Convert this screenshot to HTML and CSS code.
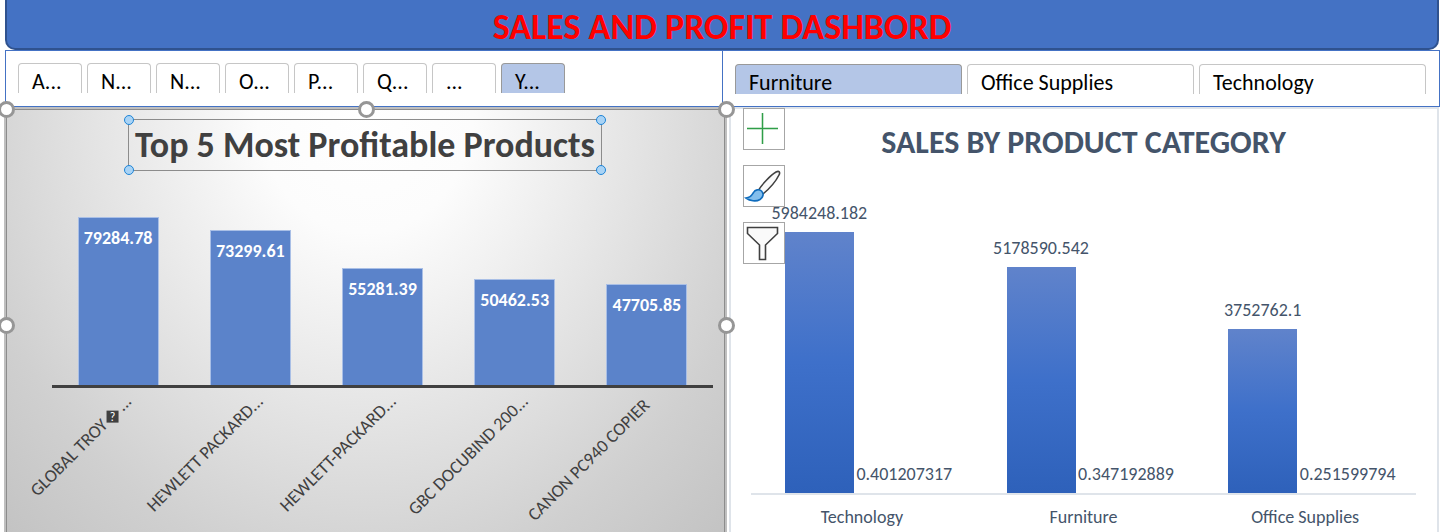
FILE: index.html
```html
<!DOCTYPE html>
<html lang="en">
<head>
<meta charset="utf-8">
<title>Sales and Profit Dashbord</title>
<link rel="stylesheet" href="styles.css">
</head>
<body>
<main class="dashboard">
  <header class="banner"><h1>SALES AND PROFIT DASHBORD</h1></header>

  <div class="slicers">
    <div class="slicer slicer-short">
      <button type="button">A...</button>
      <button type="button">N...</button>
      <button type="button">N...</button>
      <button type="button">O...</button>
      <button type="button">P...</button>
      <button type="button">Q...</button>
      <button type="button">...</button>
      <button type="button" class="selected">Y...</button>
    </div>
    <div class="slicer slicer-wide">
      <button type="button" class="selected">Furniture</button>
      <button type="button">Office Supplies</button>
      <button type="button">Technology</button>
    </div>
  </div>

  <div class="charts">
    <section class="chart products">
      <div class="title-box">
        <h2>Top 5 Most Profitable Products</h2>
        <i class="dot nw"></i><i class="dot ne"></i><i class="dot sw"></i><i class="dot se"></i>
      </div>
      <div class="plot">
        <div class="column"><div class="bar" style="height:78.5%">79284.78</div></div>
        <div class="column"><div class="bar" style="height:72.4%">73299.61</div></div>
        <div class="column"><div class="bar" style="height:54.7%">55281.39</div></div>
        <div class="column"><div class="bar" style="height:49.5%">50462.53</div></div>
        <div class="column"><div class="bar" style="height:47.2%">47705.85</div></div>
      </div>
      <div class="names">
        <div class="name"><span>GLOBAL TROY<b class="unknown">?</b>...</span></div>
        <div class="name"><span>HEWLETT PACKARD...</span></div>
        <div class="name"><span>HEWLETT-PACKARD...</span></div>
        <div class="name"><span>GBC DOCUBIND 200...</span></div>
        <div class="name whole"><span>CANON PC940 COPIER</span></div>
      </div>
      <i class="handle top left"></i><i class="handle top center"></i><i class="handle top right"></i>
      <i class="handle middle left"></i><i class="handle middle right"></i>
    </section>

    <section class="chart categories">
      <h2>SALES BY PRODUCT CATEGORY</h2>
      <div class="plot">
        <div class="group">
          <div class="series"><span>5984248.182</span><div class="bar" style="height:78.6%"></div></div>
          <div class="series"><span>0.401207317</span></div>
        </div>
        <div class="group">
          <div class="series"><span>5178590.542</span><div class="bar" style="height:68.1%"></div></div>
          <div class="series"><span>0.347192889</span></div>
        </div>
        <div class="group">
          <div class="series"><span>3752762.1</span><div class="bar" style="height:49.4%"></div></div>
          <div class="series"><span>0.251599794</span></div>
        </div>
      </div>
      <div class="axis-labels"><span>Technology</span><span>Furniture</span><span>Office Supplies</span></div>
      <div class="tools">
        <button type="button" aria-label="Chart elements">
          <svg viewBox="0 0 40 40"><path d="M3 19.500H34M18.500 4V35" stroke="#8fcb9b" stroke-width="2"/><path d="M3 19.500H34M18.500 4V35" stroke="#2f9e48"/></svg>
        </button>
        <button type="button" aria-label="Chart styles">
          <svg viewBox="0 0 40 40">
            <path d="M14 25C18 18 27 9 32 6C35 4.500 36.500 6 35 9C31.500 16 25 23 19 28Z" fill="#fafafa" stroke="#404040" stroke-width="1.600"/>
            <path d="M2 32C7 31.500 8 29 9.500 26.500C11 23.500 15 23 17.500 25C20 27.500 19.500 31 16 33.500C12 36 6 35 2 32Z" fill="#83beec" stroke="#0f6cbd" stroke-width="1.600"/>
          </svg>
        </button>
        <button type="button" aria-label="Chart filters">
          <svg viewBox="0 0 40 40"><path d="M3.500 4.500H33.500V10.500L21.500 22V36.500H15.500V22L3.500 10.500Z" fill="#fafafa" stroke="#404040" stroke-width="1.600"/></svg>
        </button>
      </div>
    </section>
  </div>
</main>
</body>
</html>
```

FILE: styles.css
```css
* { box-sizing: border-box; }

body {
  margin: 0;
  background: #fff;
  font-family: Carlito, Lato, sans-serif;
}

h1, h2 { margin: 0; font-weight: 700; white-space: nowrap; }

.dashboard {
  display: flex;
  flex-direction: column;
  height: 100vh;
  min-height: 440px;
  padding: 0 3px 0 5px;
  overflow: hidden;
}

.banner {
  margin-right: 1px;
  background: #4472c4;
  border: 2px solid #2f528f;
  border-top: 0;
  border-radius: 0 0 10px 10px;
  padding: 8px 0 2px;
  text-align: center;
}
.banner h1 { font-size: 36px; line-height: 38px; color: #f00; }

/* Slicers */
.slicers {
  display: grid;
  grid-template-columns: 716fr 717fr;
  border: 1px solid #4472c4;
}
.slicer { display: flex; gap: 5px; height: 55px; padding: 12px; }
.slicer-wide { border-left: 1px solid #4472c4; padding: 13px 13px 12px 12px; }
.slicer button {
  height: 30px;
  padding: 6px 13px 0;
  border: 1px solid #c6c6c6;
  border-bottom: 0;
  border-radius: 4px 4px 0 0;
  background: #fff;
  color: #000;
  font-family: inherit;
  font-size: 22px;
  line-height: 24px;
  text-align: left;
  white-space: nowrap;
  display: flex;
}
.slicer-short button { width: 64px; }
.slicer-wide button { flex: 1; }
.slicer button.selected { background: #b4c6e7; border-color: #999; }

/* Charts */
.charts {
  flex: 1;
  min-height: 0;
  display: grid;
  grid-template-columns: minmax(0, 723fr) minmax(0, 710fr);
  gap: 2px;
  margin-left: -1px;
  padding-right: 1px;
}
.chart {
  position: relative;
  display: flex;
  flex-direction: column;
  min-height: 0;
}
.plot { flex: 1; display: flex; min-height: 0; }

.products {
  border: 2px solid #bfbfbf;
  border-bottom: 0;
  padding: 10px 12px 0 46px;
  background: radial-gradient(540px 620px at 50% 0%, #fff 0%, #fcfcfc 20%, #d0d0d0 75%, #bdbdbd 105%);
  box-shadow: inset 1px 1px #8c8c8c, inset -1px 0 #8c8c8c;
  color: #404040;
}
.title-box {
  position: relative;
  align-self: center;
  margin-right: 35px;
  padding: 0 6px;
  border: 1px solid #8c8c8c;
}
.title-box h2 { font-size: 36px; line-height: 50px; }
.dot {
  position: absolute;
  width: 10px;
  height: 10px;
  border: 1px solid #1e84d6;
  border-radius: 50%;
  background: #a9d3f5;
}
.nw { top: -5px; left: -5px; }
.ne { top: -5px; right: -5px; }
.sw { bottom: -5px; left: -5px; }
.se { bottom: -5px; right: -5px; }

.products .plot { border-bottom: 3px solid #404040; }
.column {
  flex: 1;
  display: flex;
  flex-direction: column;
  justify-content: flex-end;
  align-items: center;
}
.products .bar {
  width: 81px;
  padding-top: 10px;
  border: 1px solid #a9bfe6;
  border-bottom: 0;
  background: #5b83ca;
  color: #fff;
  font-size: 18px;
  font-weight: 700;
  line-height: 20px;
  text-align: center;
}
.names { display: flex; height: 144px; }
.name {
  flex: 0 0 20%;
  min-width: 0;
  display: flex;
  justify-content: flex-end;
  padding-right: 56px;
}
.name.whole { padding: 4px 67px 0 0; }
.name span {
  height: 20px;
  font-size: 18px;
  line-height: 20px;
  white-space: nowrap;
  transform: rotate(-45deg);
  transform-origin: right center;
}
.name .unknown {
  display: inline-block;
  width: 12px;
  height: 12px;
  margin: 0 5px 0 3px;
  background: #404040;
  color: #fff;
  font-size: 12px;
  font-weight: 400;
  line-height: 12px;
  text-align: center;
  transform: rotate(45deg);
}

.handle {
  position: absolute;
  z-index: 2;
  width: 17px;
  height: 17px;
  border: 3px solid #969696;
  border-radius: 50%;
  background: #fff;
}
.top { top: -8px; }
.middle { top: 208px; }
.left { left: -8px; }
.center { left: calc(50% - 8px); }
.right { right: -10px; }

.categories {
  border: 2px solid #dfe4ea;
  border-bottom: 0;
  padding: 16px 21px 0 20px;
  color: #44546a;
}
.categories h2 { font-size: 32px; line-height: 36px; text-align: center; }
.categories .plot { border-bottom: 2px solid #dfe4ea; }
.group { flex: 1; min-width: 0; display: flex; justify-content: center; gap: 16px; }
.series {
  width: 69px;
  display: flex;
  flex-direction: column;
  justify-content: flex-end;
  align-items: center;
  font-size: 18px;
  line-height: 20px;
}
.series span { margin-bottom: 9px; }
.categories .bar {
  width: 100%;
  background: linear-gradient(#6083cb, #3e70ca 50%, #2e61ba);
}
.axis-labels {
  display: flex;
  height: 37px;
  padding-top: 12px;
  font-size: 18px;
  line-height: 20px;
  text-align: center;
}
.axis-labels span { flex: 1; }

.tools {
  position: absolute;
  top: -1px;
  left: 12px;
  display: flex;
  flex-direction: column;
  gap: 15px;
}
.tools button {
  width: 42px;
  height: 42px;
  padding: 0;
  border: 1px solid #a6a6a6;
  background: #fff;
}
.tools svg { display: block; width: 40px; height: 40px; fill: none; }
```
